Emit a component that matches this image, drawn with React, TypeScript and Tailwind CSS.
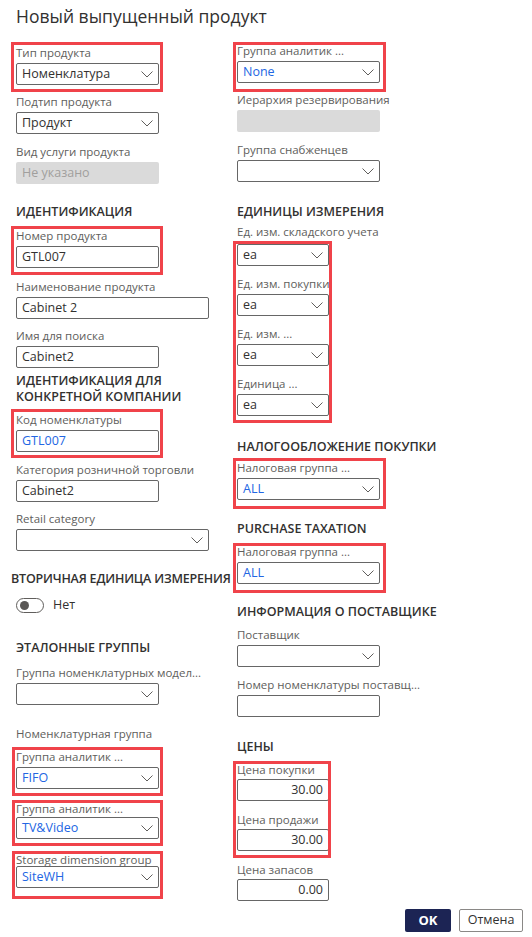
import React from 'react';

const FONT = { fontFamily: '"Open Sans", "Noto Sans", sans-serif' };

function Chevron() {
  return (
    <svg width="12" height="7" viewBox="0 0 12 7" className="shrink-0">
      <polyline points="0.5,0.5 6,6 11.5,0.5" fill="none" stroke="#605e5c" strokeWidth="1" />
    </svg>
  );
}

type FieldProps = {
  label: string;
  value?: string;
  kind?: 'select' | 'input' | 'disabled' | 'number';
  blue?: boolean;
  className?: string;
  width?: string;
  gap?: string;
};

function Field({
  label,
  value = '',
  kind = 'input',
  blue,
  className = '',
  width = 'w-[143px]',
  gap = 'mt-[2px]',
}: FieldProps) {
  const textColor = blue ? 'text-[#2266e3]' : 'text-[#323130]';
  return (
    <div className={className}>
      <div className="h-[16px] leading-[16px] text-[11.5px] text-[#605e5c] whitespace-nowrap">{label}</div>
      {kind === 'disabled' ? (
        <div className={`${width} ${gap} h-[22px] rounded-[2px] bg-[#dadada] px-[6px] flex items-center text-[12.5px] text-[#a19f9d]`}>
          {value}
        </div>
      ) : (
        <div
          className={`${width} ${gap} h-[22px] rounded-[2px] border border-[#666666] bg-white pl-[5px] pr-[5px] flex items-center text-[12.5px] ${textColor} ${
            kind === 'number' ? 'justify-end' : 'justify-between'
          }`}
        >
          <span className="leading-none">{value}</span>
          {kind === 'select' && <Chevron />}
        </div>
      )}
    </div>
  );
}

function Heading({ children, className = '' }: { children: React.ReactNode; className?: string }) {
  return (
    <div className={`text-[12.5px] leading-[16px] font-semibold text-[#323130] ${className}`}>{children}</div>
  );
}

// annotation frames drawn over the form
const FRAMES = [
  'left-[11px] top-[42px] w-[152px] h-[50px]',
  'left-[233px] top-[42px] w-[153px] h-[50px]',
  'left-[11px] top-[226px] w-[152px] h-[49px]',
  'left-[233px] top-[241px] w-[99px] h-[182px]',
  'left-[11px] top-[409px] w-[152px] h-[49px]',
  'left-[233px] top-[458px] w-[153px] h-[51px]',
  'left-[233px] top-[543px] w-[153px] h-[50px]',
  'left-[12px] top-[747px] w-[151px] h-[49px]',
  'left-[12px] top-[800px] w-[151px] h-[46px]',
  'left-[12px] top-[851px] w-[151px] h-[48px]',
  'left-[233px] top-[761px] w-[98px] h-[97px]',
];

export default function App() {
  return (
    <div className="relative w-[532px] h-[937px] bg-white overflow-hidden" style={FONT}>
      <div className="h-[40px] pl-[16px] pt-[4px] text-[17.5px] leading-[24px] text-[#323130]">Новый выпущенный продукт</div>

      <div className="flex pl-[16px]">
        {/* left column */}
        <div className="w-[221px] flex flex-col">
          <Field className="mt-[5px]" label="Тип продукта" value="Номенклатура" kind="select" />
          <Field className="mt-[9px]" label="Подтип продукта" value="Продукт" kind="select" />
          <Field className="mt-[10px]" label="Вид услуги продукта" value="Не указано" kind="disabled" />

          <Heading className="mt-[20px]">ИДЕНТИФИКАЦИЯ</Heading>
          <Field className="mt-[8px]" label="Номер продукта" value="GTL007" />
          <Field className="mt-[11px]" label="Наименование продукта" value="Cabinet 2" width="w-[193px]" />
          <Field className="mt-[9px]" label="Имя для поиска" value="Cabinet2" />

          <Heading className="mt-[5px]">
            ИДЕНТИФИКАЦИЯ ДЛЯ
            <br />
            КОНКРЕТНОЙ КОМПАНИИ
          </Heading>
          <Field className="mt-[7px]" label="Код номенклатуры" value="GTL007" blue />
          <Field className="mt-[10px]" label="Категория розничной торговли" value="Cabinet2" />
          <Field className="mt-[9px]" label="Retail category" kind="select" width="w-[193px]" />

          <Heading className="mt-[20px] ml-[-5px] whitespace-nowrap tracking-[-0.2px]">ВТОРИЧНАЯ ЕДИНИЦА ИЗМЕРЕНИЯ</Heading>
          <div className="mt-[11px] h-[15px] flex items-center gap-[9px]">
            <div className="w-[28px] h-[15px] rounded-full border border-[#605e5c] flex items-center pl-[3px]">
              <div className="w-[9px] h-[9px] rounded-full bg-[#5a5856]" />
            </div>
            <span className="text-[12.5px] text-[#323130]">Нет</span>
          </div>

          <Heading className="mt-[27px]">ЭТАЛОННЫЕ ГРУППЫ</Heading>
          <Field className="mt-[9px]" label="Группа номенклатурных модел..." kind="select" />
          <div className="mt-[21px] h-[16px] leading-[16px] text-[11.5px] text-[#605e5c]">Номенклатурная группа</div>
          <Field className="mt-[7px]" label="Группа аналитик ..." value="FIFO" kind="select" blue />
          <Field className="mt-[12px]" gap="mt-[0px]" label="Группа аналитик ..." value="TV&Video" kind="select" blue />
          <Field className="mt-[13px]" gap="mt-[-2px]" label="Storage dimension group" value="SiteWH" kind="select" blue />
        </div>

        {/* right column */}
        <div className="w-[286px] flex flex-col">
          <Field className="mt-[3px]" label="Группа аналитик ..." value="None" kind="select" blue />
          <Field className="mt-[9px]" label="Иерархия резервирования" kind="disabled" />
          <Field className="mt-[10px]" label="Группа снабженцев" kind="select" />

          <Heading className="mt-[22px]">ЕДИНИЦЫ ИЗМЕРЕНИЯ</Heading>
          <Field className="mt-[4px]" gap="mt-[4px]" label="Ед. изм. складского учета" value="ea" kind="select" width="w-[92px]" />
          <Field className="mt-[10px]" label="Ед. изм. покупки" value="ea" kind="select" width="w-[92px]" />
          <Field className="mt-[10px]" label="Ед. изм. ..." value="ea" kind="select" width="w-[92px]" />
          <Field className="mt-[10px]" label="Единица ..." value="ea" kind="select" width="w-[92px]" />

          <Heading className="mt-[23px]">НАЛОГООБЛОЖЕНИЕ ПОКУПКИ</Heading>
          <Field className="mt-[5px]" label="Налоговая группа ..." value="ALL" kind="select" blue />

          <Heading className="mt-[21px]">PURCHASE TAXATION</Heading>
          <Field className="mt-[7px]" label="Налоговая группа ..." value="ALL" kind="select" blue />

          <Heading className="mt-[20px]">ИНФОРМАЦИЯ О ПОСТАВЩИКЕ</Heading>
          <Field className="mt-[7px]" label="Поставщик" kind="select" />
          <Field className="mt-[10px]" label="Номер номенклатуры поставщ..." />

          <Heading className="mt-[22px]">ЦЕНЫ</Heading>
          <Field className="mt-[7px]" gap="mt-[1px]" label="Цена покупки" value="30.00" kind="number" width="w-[92px]" />
          <Field className="mt-[11px]" gap="mt-[1px]" label="Цена продажи" value="30.00" kind="number" width="w-[92px]" />
          <Field className="mt-[11px]" gap="mt-[1px]" label="Цена запасов" value="0.00" kind="number" width="w-[92px]" />

          <div className="mt-[8px] flex justify-end gap-[8px]">
            <button className="w-[46px] h-[23px] rounded-[2px] bg-[#1c2454] text-white text-[13px] font-bold">OK</button>
            <button className="w-[64px] h-[23px] rounded-[2px] border border-[#8a8886] bg-white text-[#323130] text-[12.5px]">
              Отмена
            </button>
          </div>
        </div>
      </div>

      {FRAMES.map((f) => (
        <div key={f} className={`absolute ${f} border-[3px] border-[#f0434a] pointer-events-none`} />
      ))}
    </div>
  );
}
